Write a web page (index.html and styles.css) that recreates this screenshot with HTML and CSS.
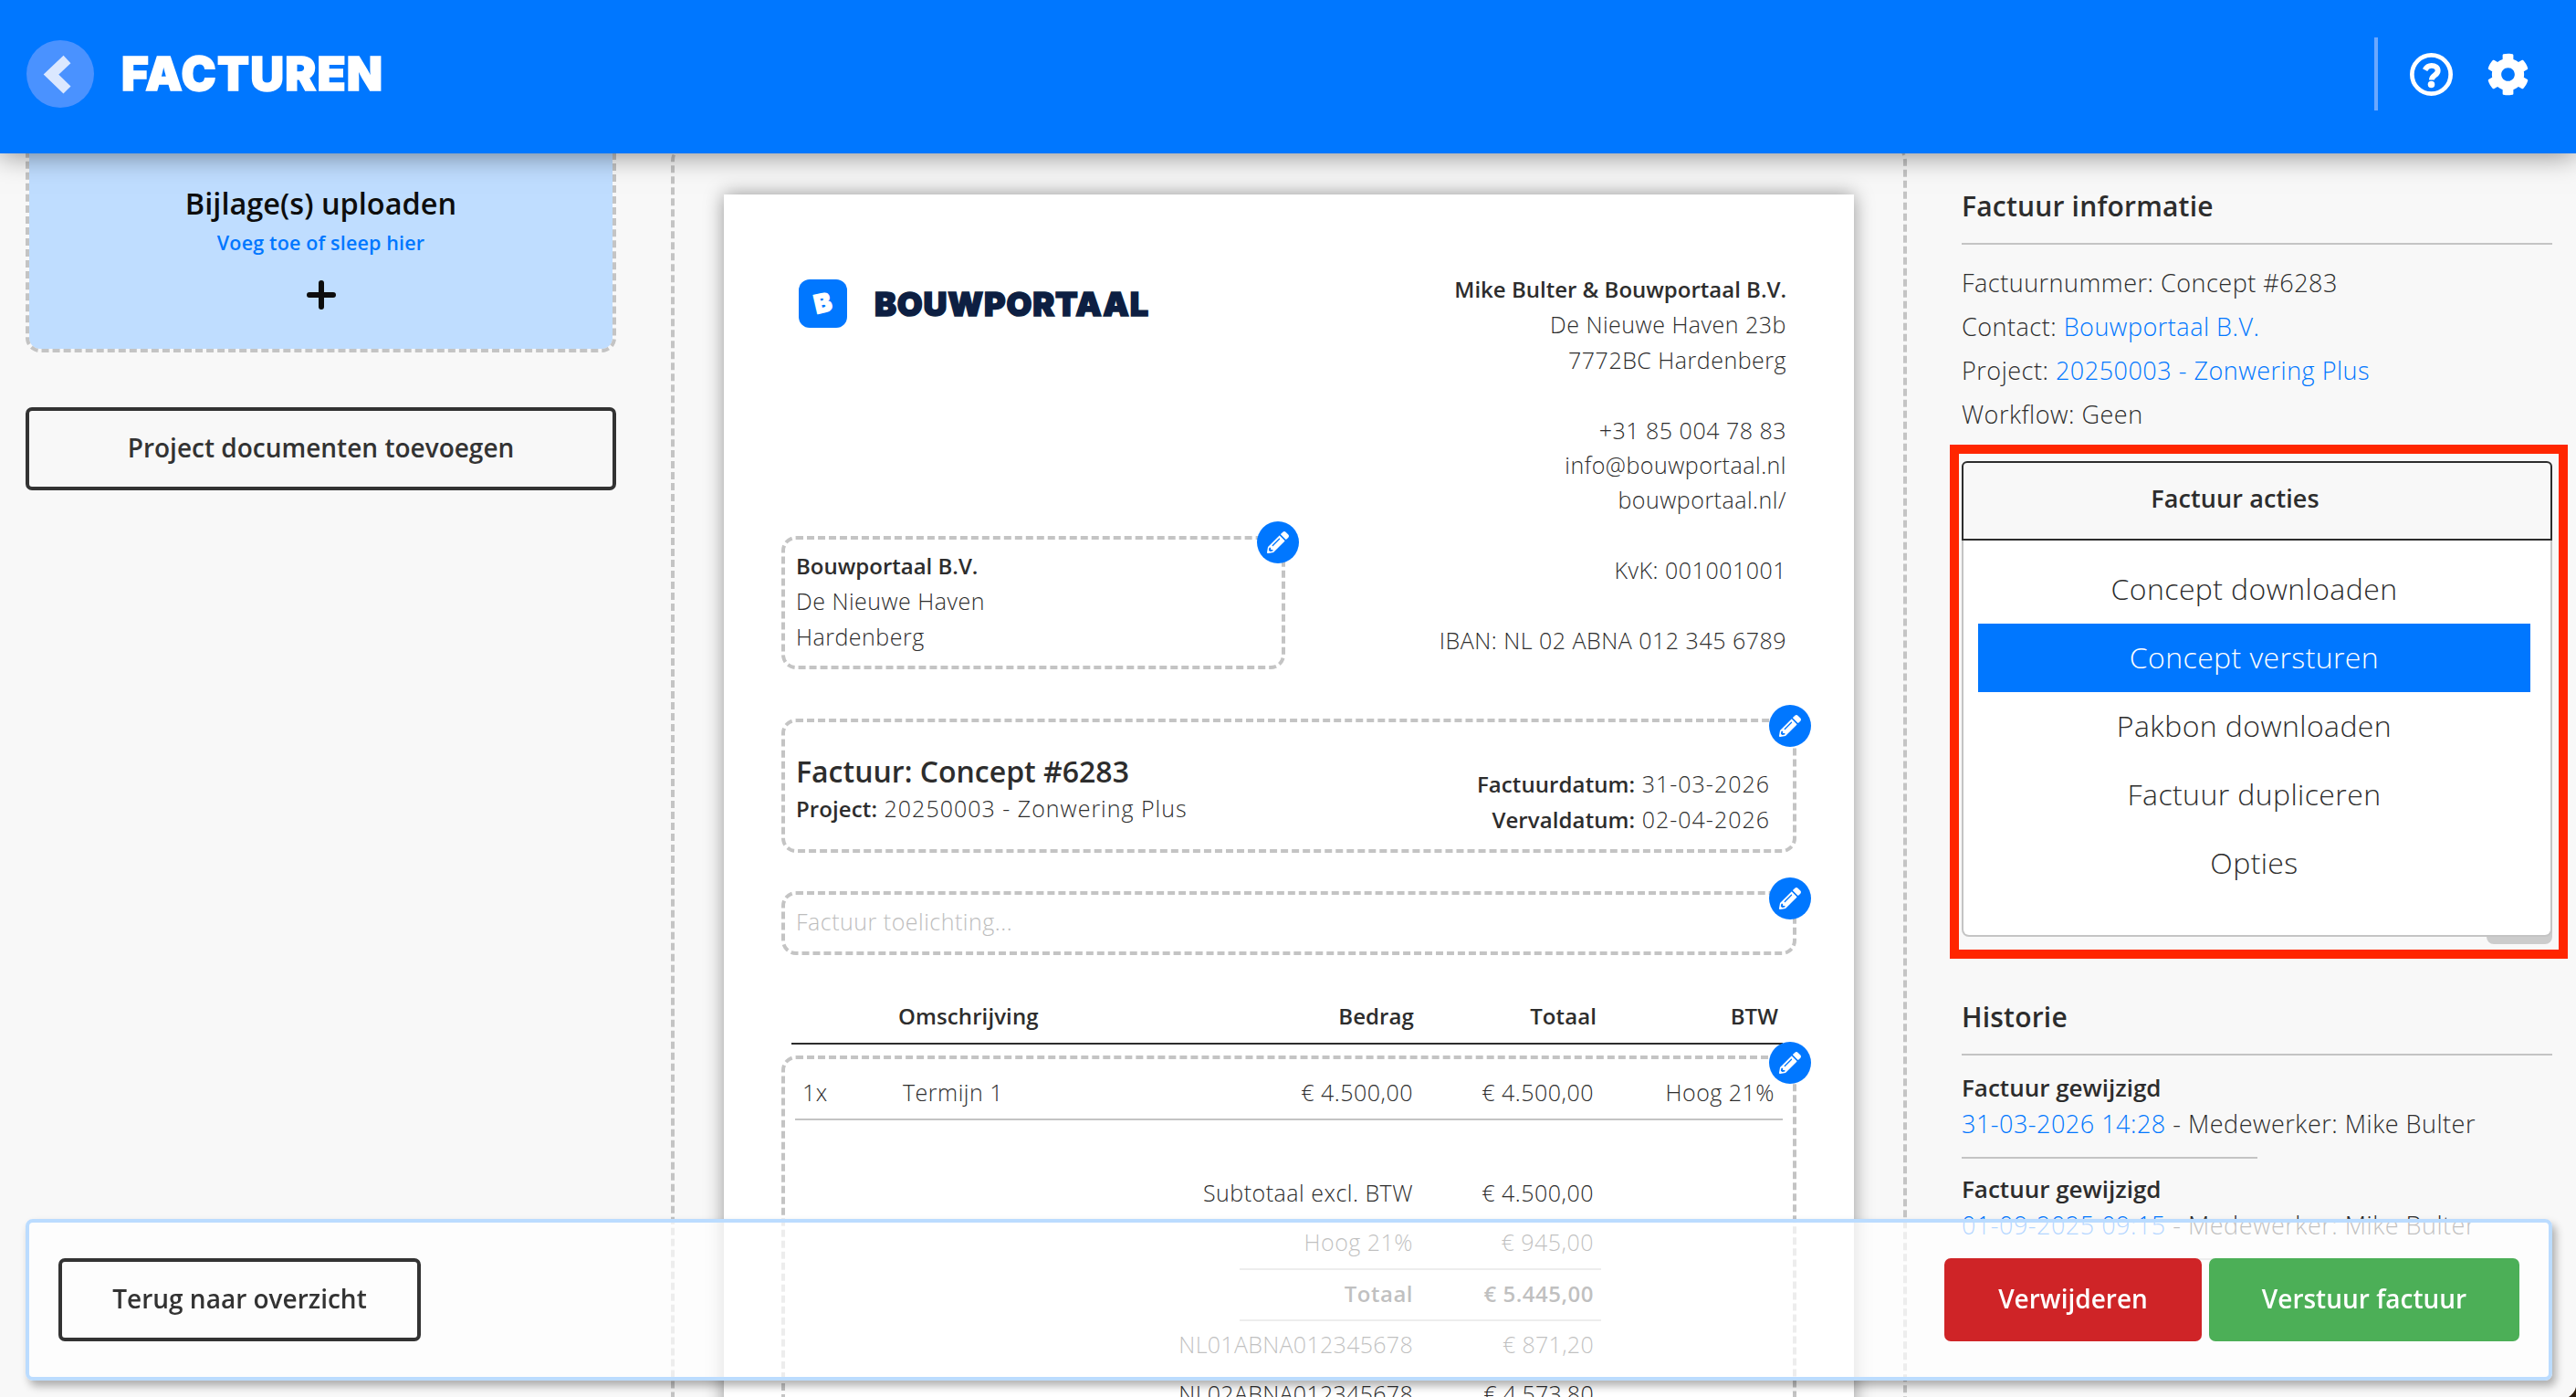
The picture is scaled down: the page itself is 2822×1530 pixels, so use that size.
FILE: index.html
```html
<!DOCTYPE html>
<html lang="nl">
<head>
  <meta charset="utf-8">
  <title>Facturen</title>
  <link rel="stylesheet" href="styles.css">
</head>
<body>

<svg class="sprite">
  <symbol id="pencil" viewBox="0 0 512 512">
    <path d="M497.9 142.1l-46.1 46.1c-4.7 4.7-12.3 4.7-17 0l-111-111c-4.7-4.7-4.7-12.3 0-17l46.1-46.1c18.7-18.7 49.1-18.7 67.9 0l60.1 60.1c18.8 18.7 18.8 49.1 0 67.9zM284.2 99.8L21.6 362.4.4 483.9c-2.9 16.4 11.4 30.6 27.8 27.8l121.5-21.3 262.6-262.6c4.7-4.7 4.7-12.3 0-17l-111-111c-4.8-4.7-12.4-4.7-17.1 0zM124.1 339.9c-5.5-5.5-5.5-14.3 0-19.8l154-154c5.5-5.5 14.3-5.5 19.8 0s5.5 14.3 0 19.8l-154 154c-5.5 5.5-14.3 5.5-19.8 0zM88 424h48v36.3l-64.5 11.3-31.1-31.1L51.7 376H88v48z"/>
  </symbol>
</svg>

<header class="header">
  <a class="back" href="#">
    <svg viewBox="0 0 74 74"><path d="M44.5 21L27 37.5l17.5 17" fill="none" stroke="#dbe8ff" stroke-width="11.5"/></svg>
  </a>
  <h1>FACTUREN</h1>
  <div class="header-icons">
    <span class="divider"></span>
    <svg class="help" viewBox="0 0 46 46">
      <circle cx="23" cy="23" r="20.7" fill="none" stroke="#fff" stroke-width="4.6"/>
      <path d="M16.2 18.2c1.6-3 4-4.6 7-4.6 3.8 0 6.8 2.2 6.8 5.4 0 5-6.6 4.6-6.6 9.8" fill="none" stroke="#fff" stroke-width="5.8"/>
      <circle cx="23" cy="33.8" r="3.7" fill="#fff"/>
    </svg>
    <svg class="gear" viewBox="0 0 512 512">
      <path fill="#fff" d="M487.4 315.7l-42.6-24.6c4.3-23.2 4.3-47 0-70.2l42.6-24.6c4.9-2.8 7.1-8.6 5.5-14-11.1-35.6-30-67.8-54.7-94.6-3.8-4.1-10-5.1-14.8-2.3L380.8 110c-17.9-15.4-38.5-27.3-60.8-35.1V25.8c0-5.6-3.9-10.5-9.4-11.7-36.7-8.2-74.3-7.8-109.2 0-5.5 1.2-9.4 6.1-9.4 11.7V75c-22.2 7.9-42.8 19.8-60.8 35.1L88.7 85.5c-4.9-2.8-11-1.9-14.8 2.3-24.7 26.7-43.6 58.9-54.7 94.6-1.7 5.4.6 11.2 5.5 14L67.3 221c-4.3 23.2-4.3 47 0 70.2l-42.6 24.6c-4.9 2.8-7.1 8.6-5.5 14 11.1 35.6 30 67.8 54.7 94.6 3.8 4.1 10 5.1 14.8 2.3l42.6-24.6c17.9 15.4 38.5 27.3 60.8 35.1v49.2c0 5.6 3.9 10.5 9.4 11.7 36.7 8.2 74.3 7.8 109.2 0 5.5-1.2 9.4-6.1 9.4-11.7v-49.2c22.2-7.9 42.8-19.8 60.8-35.1l42.6 24.6c4.9 2.8 11 1.9 14.8-2.3 24.7-26.7 43.6-58.9 54.7-94.6 1.5-5.5-.7-11.3-5.6-14.1zM256 336c-44.1 0-80-35.9-80-80s35.9-80 80-80 80 35.9 80 80-35.9 80-80 80z"/>
    </svg>
  </div>
</header>

<main class="content">

  <section class="col-left">
    <div class="upload">
      <h2>Bijlage(s) uploaden</h2>
      <p>Voeg toe of sleep hier</p>
      <svg viewBox="0 0 32 32"><path d="M16 3v26M3 16h26" stroke="#0d0d0d" stroke-width="6" stroke-linecap="round"/></svg>
    </div>
    <button class="btn btn-outline btn-documents">Project documenten toevoegen</button>
  </section>

  <section class="col-center">
    <div class="paper">
      <div class="paper-top">
        <div class="logo">
          <span class="logo-mark"><span>B</span></span>
          <span class="logo-text">BOUWPORTAAL</span>
        </div>
        <div class="company">
          <strong class="company-name">Mike Bulter &amp; Bouwportaal B.V.</strong><br>
          De Nieuwe Haven 23b<br>
          7772BC Hardenberg<br>
          <br>
          +31 85 004 78 83<br>
          info@bouwportaal.nl<br>
          bouwportaal.nl/<br>
          <br>
          KvK: 001001001<br>
          <br>
          IBAN: NL 02 ABNA 012 345 6789
        </div>
        <div class="editable client">
          <strong>Bouwportaal B.V.</strong><br>
          De Nieuwe Haven<br>
          Hardenberg
          <span class="edit"><svg><use href="#pencil"/></svg></span>
        </div>
      </div>

      <div class="editable invoice-head">
        <div>
          <h3>Factuur: Concept #6283</h3>
          <p class="project"><strong>Project:</strong> 20250003 - Zonwering Plus</p>
        </div>
        <div class="dates">
          <strong>Factuurdatum:</strong> 31-03-2026<br>
          <strong>Vervaldatum:</strong> 02-04-2026
        </div>
        <span class="edit"><svg><use href="#pencil"/></svg></span>
      </div>

      <div class="editable note">
        Factuur toelichting...
        <span class="edit"><svg><use href="#pencil"/></svg></span>
      </div>

      <div class="row row-head">
        <span></span><span>Omschrijving</span><span>Bedrag</span><span>Totaal</span><span>BTW</span>
      </div>

      <div class="editable lines">
        <div class="row row-line">
          <span>1x</span><span>Termijn 1</span><span>€ 4.500,00</span><span>€ 4.500,00</span><span>Hoog 21%</span>
        </div>
        <div class="totals">
          <div class="total"><span>Subtotaal excl. BTW</span><span>€ 4.500,00</span></div>
          <div class="total lined"><span>Hoog 21%</span><span>€ 945,00</span></div>
          <div class="total lined sum"><span>Totaal</span><span>€ 5.445,00</span></div>
          <div class="total account"><span>NL01ABNA012345678</span><span>€ 871,20</span></div>
          <div class="total account"><span>NL02ABNA012345678</span><span>€ 4.573,80</span></div>
        </div>
        <span class="edit"><svg><use href="#pencil"/></svg></span>
      </div>
    </div>
  </section>

  <section class="col-right">
    <h2>Factuur informatie</h2>
    <ul class="info">
      <li>Factuurnummer: Concept #6283</li>
      <li>Contact: <a href="#">Bouwportaal B.V.</a></li>
      <li>Project: <a href="#">20250003 - Zonwering Plus</a></li>
      <li>Workflow: Geen</li>
    </ul>

    <div class="actions">
      <button class="actions-toggle">Factuur acties</button>
      <ul class="actions-menu">
        <li>Concept downloaden</li>
        <li class="active">Concept versturen</li>
        <li>Pakbon downloaden</li>
        <li>Factuur dupliceren</li>
        <li>Opties</li>
      </ul>
      <span class="actions-stub"></span>
      <span class="marker"></span>
    </div>

    <h2>Historie</h2>
    <div class="history">
      <div class="history-item">
        <strong>Factuur gewijzigd</strong>
        <p><a href="#">31-03-2026 14:28</a> - Medewerker: Mike Bulter</p>
      </div>
      <div class="history-item">
        <strong>Factuur gewijzigd</strong>
        <p><a href="#">01-09-2025 09:15</a> - Medewerker: Mike Bulter</p>
      </div>
    </div>
  </section>
</main>

<footer class="bottom-bar">
  <button class="btn btn-outline btn-back">Terug naar overzicht</button>
  <button class="btn btn-red">Verwijderen</button>
  <button class="btn btn-green">Verstuur factuur</button>
</footer>

<svg class="corner" viewBox="0 0 8 11"><path d="M8 0v11H0C4 8 7 5 8 0z" fill="#2e1d0c"/></svg>

</body>
</html>
```
FILE: styles.css
```css
* {
  box-sizing: border-box;
}

body {
  margin: 0;
  height: 1530px;
  overflow: hidden;
  background: #f8f8f8;
  color: #2d2d2d;
  font-family: "Open Sans", sans-serif;
  font-weight: 350;
  font-size: 27px;
  letter-spacing: 0.5px;
}

h1, h2, h3, p, ul {
  margin: 0;
  padding: 0;
}

ul {
  list-style: none;
}

a {
  color: #0077ff;
  text-decoration: none;
}

strong {
  font-weight: 650;
  letter-spacing: 0;
}

button {
  font-family: inherit;
  color: inherit;
}

.sprite {
  display: none;
}

/* header */

.header {
  position: fixed;
  top: 0;
  left: 0;
  right: 0;
  z-index: 10;
  height: 168px;
  padding: 0 51px 6px 29px;
  display: flex;
  align-items: center;
  background: #0077ff;
  box-shadow: 0 0 30px rgba(0, 0, 0, 0.5);
}

.back {
  width: 74px;
  height: 74px;
  border-radius: 50%;
  background: #4a92ff;
}

.back svg {
  display: block;
}

.header h1 {
  margin-left: 30px;
  color: #fff;
  font: 900 51px/60px Inter, sans-serif;
  letter-spacing: 1.2px;
  -webkit-text-stroke: 1.5px #fff;
}

.header-icons {
  margin-left: auto;
  display: flex;
  align-items: center;
}

.divider {
  width: 4px;
  height: 80px;
  background: #6ba8ff;
}

.help {
  width: 47px;
  height: 47px;
  margin: 0 37px 0 35px;
}

.gear {
  width: 47px;
  height: 47px;
}

/* columns */

.content {
  display: grid;
  grid-template-columns: 735px 1354px 733px;
  height: 1530px;
  padding-top: 160px;
  overflow: hidden;
}

.col-left {
  padding: 0 60px 0 28px;
}

.upload {
  height: 226px;
  padding-top: 37px;
  border: 4px dashed #c4c4c4;
  border-top: 0;
  border-radius: 0 0 16px 16px;
  background: #bfddff;
  background-clip: padding-box;
  text-align: center;
}

.upload h2 {
  color: #0d0d0d;
  font-size: 32.5px;
  line-height: 52px;
  font-weight: 570;
  letter-spacing: 0;
}

.upload p {
  color: #0077ff;
  font-size: 21.5px;
  line-height: 34px;
  font-weight: 570;
  letter-spacing: 0.15px;
}

.upload svg {
  width: 32px;
  height: 32px;
  margin-top: 24px;
}

.btn {
  height: 91px;
  border: 0;
  border-radius: 7px;
  padding: 0 0 3px;
  font-size: 28px;
  font-weight: 620;
  letter-spacing: 0;
}

.btn-outline {
  border: 4px solid #333;
  background: transparent;
  color: #333;
}

.btn-documents {
  width: 100%;
  margin-top: 60px;
}

.col-center {
  height: 1500px;
  border: 4px dashed #c4c4c4;
  border-width: 0 4px;
  border-radius: 16px;
  padding: 53px 54px 0;
}

/* invoice */

.paper {
  height: 1500px;
  padding: 84px 63px 0 63px;
  background: #fff;
  box-shadow: 0 0 20px rgba(0, 0, 0, 0.4);
  font-size: 25px;
  line-height: 38.4px;
}

.paper strong {
  font-size: 24px;
}

.paper-top {
  display: grid;
  grid-template-columns: 552px 1fr;
  grid-template-rows: 290px 146px;
}

.logo {
  display: flex;
  align-items: center;
  align-self: start;
  margin: 9px 0 0 19px;
}

.logo-mark {
  width: 53px;
  height: 53px;
  border-radius: 12px;
  background: #0077ff;
  color: #fff;
  font: 900 28px/53px Inter, sans-serif;
  letter-spacing: 0;
  text-align: center;
  -webkit-text-stroke: 1.5px #fff;
}

.logo-mark span {
  display: block;
  transform: rotate(-13deg);
}

.logo-text {
  margin-left: 30px;
  color: #0d1f42;
  font: 900 36px/44px Inter, sans-serif;
  letter-spacing: 0.8px;
  -webkit-text-stroke: 1.5px #0d1f42;
}

.company {
  grid-column: 2;
  grid-row: 1 / 3;
  padding-right: 11px;
  text-align: right;
  white-space: nowrap;
}

.editable {
  position: relative;
  border: 4px dashed #c4c4c4;
  border-radius: 16px;
}

.edit {
  position: absolute;
  top: -19px;
  right: -20px;
  width: 46px;
  height: 46px;
  border-radius: 50%;
  background: #0077ff;
  display: flex;
  align-items: center;
  justify-content: center;
}

.edit svg {
  width: 24px;
  height: 24px;
  fill: #fff;
}

.client {
  grid-column: 1;
  grid-row: 2;
  padding: 9px 0 0 12px;
}

.client .edit {
  top: -20px;
  right: -19px;
}

.invoice-head {
  display: flex;
  justify-content: space-between;
  height: 147px;
  margin-top: 54px;
  padding: 33px 25px 0 12px;
}

.invoice-head h3 {
  font-size: 32px;
  line-height: 42px;
  font-weight: 630;
  letter-spacing: 0;
}

.invoice-head .project {
  line-height: 39px;
  letter-spacing: 1px;
}

.dates {
  padding-top: 15px;
  letter-spacing: 1px;
  text-align: right;
}

.invoice-head strong {
  letter-spacing: 0.1px;
}

.note {
  height: 70px;
  margin-top: 42px;
  padding: 10px 12px;
  color: #bdbdbd;
}

.row {
  display: grid;
}

.row span:nth-child(n + 3) {
  text-align: right;
}

.row-head {
  grid-template-columns: 117px 365px 200px 200px 199px;
  margin: 48px 15px 0 11px;
  height: 50px;
  border-bottom: 2px solid #2d2d2d;
  font-size: 24px;
  font-weight: 650;
  letter-spacing: 0.1px;
}

.lines {
  height: 500px;
  margin-top: 12px;
  padding: 0 11px;
}

.lines .edit {
  top: -19px;
}

.row-line {
  grid-template-columns: 110px 359px 200px 198px 198px;
  height: 67px;
  padding: 17px 0 0 8px;
  border-bottom: 2px solid #c4c4c4;
}

.totals {
  width: 396px;
  margin: 52px 0 0 487px;
}

.total {
  display: grid;
  grid-template-columns: 190px 198px;
  height: 54px;
  line-height: 54px;
  white-space: nowrap;
}

.total span {
  display: flex;
  justify-content: flex-end;
}

.total.lined {
  height: 58px;
  border-bottom: 2px solid #c4c4c4;
}

.total.sum {
  height: 56px;
  line-height: 52px;
  font-size: 24px;
  font-weight: 650;
}

.total.account {
  line-height: 51px;
  letter-spacing: 0.3px;
}

/* right column */

.col-right {
  padding: 40px 26px 0 60px;
}

.col-right h2 {
  height: 68px;
  font-size: 30px;
  line-height: 52px;
  font-weight: 630;
  letter-spacing: 0.2px;
  border-bottom: 2px solid #c4c4c4;
}

.info {
  padding-top: 18px;
}

.info li {
  line-height: 48px;
}

.actions {
  position: relative;
  margin: 27px 0 62px;
  height: 521px;
}

.actions-toggle {
  display: block;
  width: 100%;
  height: 87px;
  padding: 0 48px 6px 0;
  border: 2px solid #2d2d2d;
  border-radius: 6px 6px 0 0;
  background: transparent;
  font-size: 27px;
  font-weight: 650;
  letter-spacing: 0.1px;
}

.actions-menu {
  height: 434px;
  padding: 16px 22px 0 16px;
  border: 2px solid #c4c4c4;
  border-top: 0;
  border-radius: 0 0 8px 8px;
  background: #fff;
  text-align: center;
  font-size: 32px;
  letter-spacing: 0.4px;
}

.actions-menu li {
  height: 75px;
  line-height: 73px;
}

.actions-menu .active {
  background: #0077ff;
  color: #fff;
}

.actions-stub {
  position: absolute;
  right: 0;
  bottom: -8px;
  z-index: -1;
  width: 72px;
  height: 20px;
  border-radius: 0 0 8px 8px;
  background: #ccc;
}

.marker {
  position: absolute;
  inset: -18px -17px -24px -13px;
  border: 10px solid #ff2600;
}

.history-item {
  height: 111px;
  padding-top: 15px;
}

.history-item strong {
  display: block;
  font-size: 26px;
  line-height: 40px;
}

.history-item p {
  line-height: 40px;
}

.history-item::after {
  content: "";
  display: block;
  width: 50%;
  height: 2px;
  margin-top: 16px;
  background: #c4c4c4;
}

/* bottom bar */

.bottom-bar {
  position: fixed;
  left: 28px;
  right: 26px;
  bottom: 18px;
  height: 177px;
  padding: 0 32px;
  display: flex;
  align-items: center;
  border: 4px solid #bbdcff;
  border-radius: 8px;
  background: rgba(255, 255, 255, 0.7);
  box-shadow: 4px 6px 10px rgba(0, 0, 0, 0.3);
}

.btn-back {
  width: 397px;
  margin-right: auto;
}

.btn-red {
  width: 282px;
  margin-right: 8px;
  background: #cf2427;
  color: #fff;
}

.btn-green {
  width: 340px;
  background: #4caf57;
  color: #fff;
}

.corner {
  position: fixed;
  right: 0;
  bottom: 0;
  width: 8px;
  height: 11px;
}
```
